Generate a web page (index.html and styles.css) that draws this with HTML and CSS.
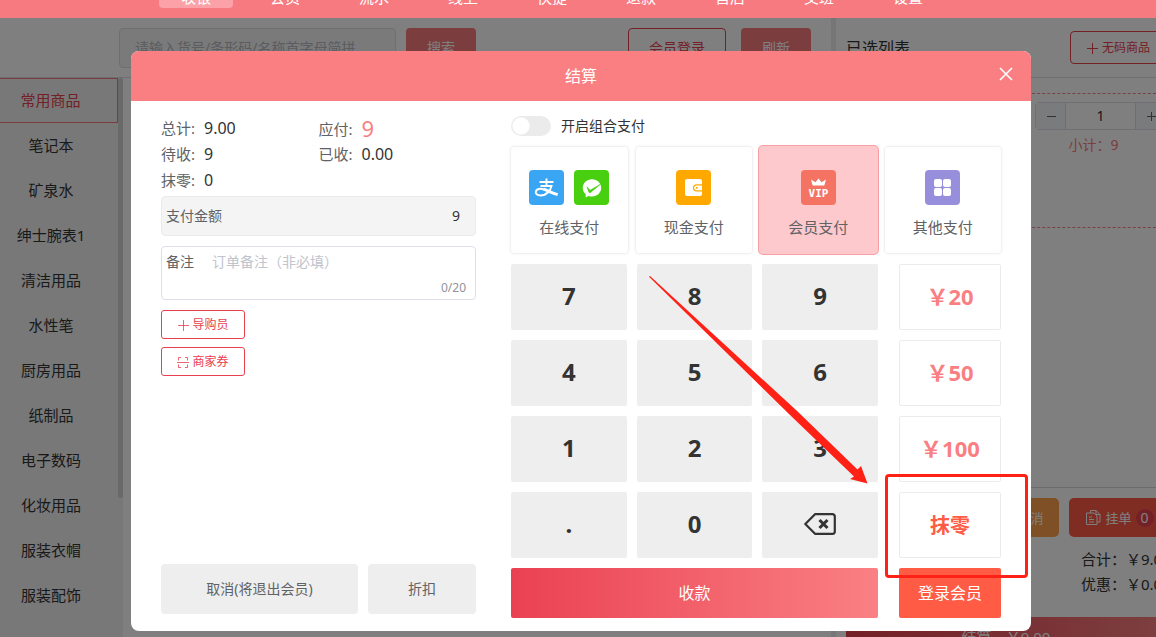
FILE: index.html
```html
<!DOCTYPE html>
<html lang="zh-CN">
<head>
<meta charset="utf-8">
<title>结算</title>
<link rel="stylesheet" href="styles.css">
</head>
<body>
<div class="app">
  <nav class="nav">
    <a class="nav-item active" href="#">收银</a>
    <a class="nav-item" href="#">会员</a>
    <a class="nav-item" href="#">流水</a>
    <a class="nav-item" href="#">线上</a>
    <a class="nav-item" href="#">快捷</a>
    <a class="nav-item" href="#">退款</a>
    <a class="nav-item" href="#">售后</a>
    <a class="nav-item" href="#">交班</a>
    <a class="nav-item" href="#">设置</a>
  </nav>
  <div class="workspace">
    <main class="goods">
      <div class="toolbar">
        <input class="search" type="text" aria-label="搜索商品" placeholder="请输入货号/条形码/名称首字母简拼">
        <button class="btn solid">搜索</button>
        <button class="btn outline member">会员登录</button>
        <button class="btn solid">刷新</button>
      </div>
      <div class="categories">
        <ul class="cat-list">
          <li class="cat current">常用商品</li>
          <li class="cat">笔记本</li>
          <li class="cat">矿泉水</li>
          <li class="cat">绅士腕表1</li>
          <li class="cat">清洁用品</li>
          <li class="cat">水性笔</li>
          <li class="cat">厨房用品</li>
          <li class="cat">纸制品</li>
          <li class="cat">电子数码</li>
          <li class="cat">化妆用品</li>
          <li class="cat">服装衣帽</li>
          <li class="cat">服装配饰</li>
        </ul>
        <div class="scroll-track"><div class="scroll-thumb"></div></div>
      </div>
    </main>
    <aside class="cart">
      <header class="cart-head">
        <h2 class="cart-title">已选列表</h2>
        <button class="btn outline nocode">
          <svg class="icon-12" viewBox="0 0 12 12"><path d="M6.500 1v11M1 6.500h11" stroke="currentColor" fill="none"/></svg>
          无码商品
        </button>
      </header>
      <div class="cart-body">
        <div class="cart-line">
          <div class="stepper">
            <button class="step" aria-label="减少"><svg class="icon-12" viewBox="0 0 12 12"><path d="M2 6.500h9" stroke="currentColor"/></svg></button>
            <input class="qty" type="text" aria-label="数量" value="1">
            <button class="step" aria-label="增加"><svg class="icon-12" viewBox="0 0 12 12"><path d="M2 6.500h9M6.500 2v9" stroke="currentColor"/></svg></button>
          </div>
          <p class="subtotal">小计：9</p>
        </div>
      </div>
      <footer class="cart-foot">
        <div class="cart-actions">
          <button class="act cancel">取消</button>
          <button class="act hold">
            <svg class="icon-15" viewBox="0 0 15 15" fill="none" stroke="currentColor"><path d="M4.500 3V.5H10L14 4.500V12H11M10 .5V4.500H14M.5 3H8l3 3v8.500H.5zM3 7h3M3 9.500h5M3 12h5"/></svg>
            挂单<span class="count">0</span>
          </button>
        </div>
        <dl class="sums">
          <div class="sum"><dt>合计：</dt><dd>￥9.00</dd></div>
          <div class="sum"><dt>优惠：</dt><dd>￥0.00</dd></div>
        </dl>
        <button class="checkout">结算<span>￥9.00</span></button>
      </footer>
    </aside>
    <div class="overlay">
      <section class="dialog" role="dialog" aria-label="结算">
        <header class="dialog-head">
          <h1 class="dialog-title">结算</h1>
          <button class="close" aria-label="关闭"><svg class="icon-14" viewBox="0 0 14 14"><path d="M1 1l12 12M13 1L1 13" stroke="#fff" stroke-width="1.600"/></svg></button>
        </header>
        <div class="dialog-body">
          <div class="summary">
            <dl class="totals">
              <div class="total"><dt>总计:</dt><dd>9.00</dd></div>
              <div class="total due"><dt>应付:</dt><dd>9</dd></div>
              <div class="total"><dt>待收:</dt><dd>9</dd></div>
              <div class="total"><dt>已收:</dt><dd>0.00</dd></div>
              <div class="total"><dt>抹零:</dt><dd>0</dd></div>
            </dl>
            <div class="amount">
              <label for="amount">支付金额</label>
              <input id="amount" class="amount-input" type="text" value="9">
            </div>
            <div class="remark">
              <label for="remark">备注</label>
              <textarea id="remark" class="remark-input" rows="1" placeholder="订单备注（非必填）"></textarea>
              <span class="remark-count">0/20</span>
            </div>
            <button class="mini"><svg class="icon-12" viewBox="0 0 12 12"><path d="M6.500 1v11M1 6.500h11" stroke="currentColor" stroke-opacity=".8" fill="none"/></svg>导购员</button>
            <button class="mini"><svg class="icon-12" viewBox="0 0 12 12"><path d="M4 1.500H1.500V4.500M8 1.500h2.500V4.500M1.500 8.500v3H4M10.500 8.500v3H8M0 6.500h12" stroke="currentColor" stroke-opacity=".8" fill="none"/></svg>商家券</button>
            <div class="leave">
              <button class="plain quit">取消(将退出会员)</button>
              <button class="plain discount">折扣</button>
            </div>
          </div>
          <div class="payment">
            <label class="combine"><input class="switch" type="checkbox">开启组合支付</label>
            <div class="methods">
              <button class="method">
                <span class="logos">
                  <svg class="logo" viewBox="0 0 35 35"><rect width="35" height="35" rx="4" fill="#3aa5f2"/><g fill="none" stroke="#fff" stroke-width="1.900"><path d="M10.500 12H24.500M17.500 8.500V16M11.500 16H22.500C21.500 20 18 25.500 11.500 25.500C8 25.500 6.500 23.500 6.800 21.800C7.400 18.600 11.500 18.200 15 19.500"/><path d="M14.500 19.200C19 20.800 23 22.800 28.700 24.600" stroke-width="3"/></g></svg>
                  <svg class="logo" viewBox="0 0 35 35"><rect width="35" height="35" rx="4" fill="#48d010"/><path d="M18 9.200c5.200 0 9.200 3.800 9.200 8.600s-4 8.700-9.200 8.700c-1.300 0-2.500-.2-3.600-.6L11.600 27.500l.2-3.200C9.900 22.700 8.800 20.400 8.800 17.800c0-4.800 4-8.600 9.200-8.600z" fill="#fff"/><path d="M13 16.800l3 3.500L26.500 14.200l-10 8.300c-.6.500-1.200.4-1.600-.3z" fill="#48d010" stroke="#48d010" stroke-width=".6"/></svg>
                </span>
                在线支付
              </button>
              <button class="method">
                <span class="logos">
                  <svg class="logo" viewBox="0 0 35 35"><rect width="35" height="35" rx="4" fill="#ffa900"/><rect x="9" y="9" width="17" height="17" rx="2" fill="#fff"/><path d="M26 14.800H20.500a3 3 0 0 0 0 6H26" fill="#fff" stroke="#ffa900" stroke-width="1.200"/><circle cx="20.800" cy="17.800" r="1" fill="#ffa900"/></svg>
                </span>
                现金支付
              </button>
              <button class="method selected">
                <span class="logos">
                  <svg class="logo" viewBox="0 0 35 35"><rect width="35" height="35" rx="4" fill="#f57363"/><path d="M10 9.500l4.500 2.800L17.500 8.500l3 3.800L25 9.500 23.300 15.500H11.700z" fill="#fff"/><text class="vip" x="17.500" y="27" text-anchor="middle">VIP</text></svg>
                </span>
                会员支付
              </button>
              <button class="method">
                <span class="logos">
                  <svg class="logo" viewBox="0 0 35 35"><rect width="35" height="35" rx="4" fill="#988fdc"/><g fill="#fff"><rect x="9" y="9" width="8" height="8" rx="2"/><rect x="18" y="9" width="8" height="8" rx="2"/><rect x="9" y="18" width="8" height="8" rx="2"/><rect x="18" y="18" width="8" height="8" rx="2"/></g></svg>
                </span>
                其他支付
              </button>
            </div>
            <div class="pads">
              <div class="keypad">
                <button class="key">7</button><button class="key">8</button><button class="key">9</button>
                <button class="key">4</button><button class="key">5</button><button class="key">6</button>
                <button class="key">1</button><button class="key">2</button><button class="key">3</button>
                <button class="key">.</button><button class="key">0</button>
                <button class="key" aria-label="退格"><svg class="erase" viewBox="0 0 32 22" fill="none" stroke="#333"><path d="M11 1.200H28.500a2.300 2.300 0 0 1 2.300 2.300v15a2.300 2.300 0 0 1-2.300 2.300H11L1.300 11z" stroke-width="2.200" stroke-linejoin="round"/><path d="M15.500 7l8 8M23.500 7l-8 8" stroke-width="3"/></svg></button>
                <button class="collect">收款</button>
              </div>
              <div class="quick">
                <button class="cash">￥20</button>
                <button class="cash">￥50</button>
                <button class="cash">￥100</button>
                <button class="cash round">抹零</button>
                <button class="login">登录会员</button>
              </div>
            </div>
          </div>
        </div>
        <svg class="pointer" viewBox="0 0 219 208"><path d="M0 .8L1 0 147 134 208.500 193.500 212 190 218.500 207.500 201 203 205 200.500 141 139z" fill="#ff2116"/></svg>
        <div class="marker"></div>
      </section>
    </div>
  </div>
</div>
</body>
</html>
```
FILE: styles.css
```css
* { box-sizing: border-box; }
html, body { height: 100%; }
body {
  margin: 0;
  overflow: hidden;
  background: #fff;
  color: #333;
  font: 14px/20px "Noto Sans", "Noto Sans CJK SC", sans-serif;
}
button, input, textarea { font: inherit; color: inherit; margin: 0; }
button { border: 0; padding: 0; background: none; cursor: pointer; white-space: nowrap; }
h1, h2, p, dl, dd, ul { margin: 0; padding: 0; font-weight: 400; }
ul { list-style: none; }
svg { display: block; flex: none; }
.icon-12 { width: 12px; height: 12px; }
.icon-14 { width: 14px; height: 14px; }
.icon-15 { width: 15px; height: 15px; }

.app { display: flex; flex-direction: column; min-width: 1176px; height: 100vh; }

.nav {
  display: flex;
  align-items: flex-end;
  gap: 15px;
  height: 18px;
  padding: 0 0 10px 159px;
  overflow: hidden;
  background: #f77a81;
}
.nav-item {
  width: 74px;
  height: 22px;
  border-radius: 4px;
  color: #fff;
  font-size: 15px;
  line-height: 22px;
  text-align: center;
  text-decoration: none;
}
.nav-item.active { background: #fba1a7; }

.workspace { position: relative; display: flex; flex: 1; min-height: 0; }
.goods { display: flex; flex: 1; flex-direction: column; min-height: 0; }
.toolbar {
  display: flex;
  align-items: center;
  gap: 10px;
  height: 60px;
  padding: 0 20px 0 119px;
  border-bottom: 1px solid #dcdfe6;
}
.search {
  width: 277px;
  height: 40px;
  padding: 0 15px;
  border: 1px solid #dcdfe6;
  border-radius: 4px;
  background: #f5f5f5;
}
.search::placeholder { color: #b4b8c0; }
.btn { height: 40px; border-radius: 4px; }
.btn.solid { width: 70px; background: #f87a7d; color: #fff; }
.btn.outline { border: 1px solid #e9404f; color: #e9404f; }
.btn.member { width: 98px; margin: 0 5px 0 auto; }

.categories { display: flex; width: 123px; flex: 1; min-height: 0; background: #f0f0f0; }
.cat-list { flex: 1; overflow: hidden; }
.cat {
  height: 45px;
  padding-right: 16px;
  border: 1px solid transparent;
  font-size: 15px;
  line-height: 42px;
  text-align: center;
}
.cat.current { border-color: #f8777c; border-left: 0; color: #e9404f; }
.scroll-track { width: 5px; }
.scroll-thumb { height: 420px; border-radius: 3px; background: #d2d2d2; }

.cart {
  display: flex;
  flex-direction: column;
  width: 345px;
  border-left: 5px solid #ececec;
}
.cart-head {
  display: flex;
  align-items: center;
  justify-content: space-between;
  height: 60px;
  padding: 0 10px;
  border-bottom: 1px solid #dcdfe6;
}
.cart-title { font-size: 16px; }
.nocode {
  display: flex;
  align-items: center;
  justify-content: center;
  gap: 4px;
  width: 96px;
  height: 33px;
  font-size: 12px;
}
.cart-body { flex: 1; padding-top: 15px; }
.cart-line {
  display: flex;
  flex-direction: column;
  align-items: flex-end;
  gap: 5px;
  height: 135px;
  padding: 8px 10px;
  border: dashed #f0848a;
  border-width: 1px 0;
}
.stepper {
  display: flex;
  width: 131px;
  height: 28px;
  border: 1px solid #dcdfe6;
  border-radius: 4px;
}
.step { display: flex; align-items: center; justify-content: center; width: 29px; background: #f5f7fa; color: #606266; }
.qty {
  flex: 1;
  min-width: 0;
  padding: 0;
  border: solid #dcdfe6;
  border-width: 0 1px;
  background: none;
  text-align: center;
}
.subtotal { width: 131px; color: #f87a7d; text-align: center; padding-right: 14px; }
.cart-foot { padding: 10px 10px 0; border-top: 1px solid #d4d6dc; }
.cart-actions { display: flex; justify-content: flex-end; gap: 10px; }
.act { width: 97px; height: 39px; border-radius: 5px; color: #fff; font-size: 13px; }
.act.cancel { padding-left: 40px; background: #ff9f4a; }
.hold { display: flex; align-items: center; justify-content: center; gap: 4px; padding-left: 5px; background: #ff5b45; }
.count {
  width: 18px;
  border-radius: 9px;
  background: #e9404f;
  font-size: 14px;
  line-height: 18px;
}
.sums { height: 80px; padding: 10px 0 0 235px; font-size: 15px; line-height: 25px; }
.sum { display: flex; white-space: nowrap; }
.checkout {
  display: block;
  width: 100%;
  height: 40px;
  margin-bottom: -20px;
  background: linear-gradient(90deg, #e9404f, #fa7f81);
  color: #fff;
  font-size: 15px;
}
.checkout span { margin-left: 14px; }

.overlay {
  position: absolute;
  inset: 0;
  display: flex;
  align-items: flex-start;
  justify-content: flex-start;
  padding: 33px 0 0 131px;
  background: rgba(0, 0, 0, .5);
}
.dialog {
  position: relative;
  width: 900px;
  overflow: hidden;
  border-radius: 8px;
  background: #fff;
}
.dialog-head {
  display: flex;
  align-items: center;
  height: 50px;
  padding: 0 18px;
  background: #fa7f82;
  color: #fff;
}
.dialog-title { flex: 1; padding-left: 14px; font-size: 16px; text-align: center; }
.close { padding-bottom: 5px; }
.dialog-body { display: flex; gap: 35px; padding: 15px 30px 13px; }

.summary { display: flex; flex: 1; flex-direction: column; align-items: flex-start; }
.totals { display: grid; grid-template-columns: 1fr 1fr; width: 100%; height: 80px; grid-template-rows: 24px 28px 24px; }
.total { display: flex; align-items: center; gap: 9px; }
.total dt { color: #606266; font-size: 15px; }
.total dd { font-size: 16px; }
.total.due dt { padding-top: 2px; }
.total.due dd { color: #fa7f82; font-size: 22px; }
.amount {
  display: flex;
  align-items: center;
  justify-content: space-between;
  width: 100%;
  height: 40px;
  padding: 0 15px 0 4px;
  border: 1px solid #ebebeb;
  border-radius: 4px;
  background: #f4f4f4;
}
.amount label { color: #606266; }
.amount-input { width: 120px; padding: 0; border: 0; background: none; text-align: right; }
.remark {
  display: grid;
  grid-template-columns: 46px 1fr;
  width: 100%;
  height: 54px;
  margin: 10px 0;
  padding: 5px 9px 0 4px;
  border: 1px solid #dcdfe6;
  border-radius: 4px;
}
.remark label { color: #606266; }
.remark-input { height: 24px; padding: 0; border: 0; resize: none; overflow: hidden; background: none; }
.remark-input::placeholder { color: #c0c4cc; }
.remark-count { grid-column: 2; color: #909399; font-size: 12px; text-align: right; }
.mini {
  display: flex;
  align-items: center;
  justify-content: center;
  gap: 3px;
  width: 84px;
  height: 29px;
  margin-bottom: 8px;
  border: 1px solid #e9404f;
  border-radius: 3px;
  color: #e9404f;
  font-size: 12px;
}
.leave { display: flex; gap: 10px; width: 100%; margin: auto 0 4px; }
.plain { height: 50px; border-radius: 4px; background: #eee; color: #606266; }
.quit { flex: 1; }
.discount { width: 108px; }

.payment { width: 490px; }
.combine { display: flex; align-items: center; gap: 10px; height: 20px; }
.switch {
  appearance: none;
  width: 40px;
  height: 20px;
  margin: 0;
  border-radius: 10px;
  background: radial-gradient(circle at 10px 10px, #fff 8px, #ebebeb 9px);
}
.methods { display: grid; grid-template-columns: repeat(4, 1fr); gap: 8px; margin: 11px 0; }
.method {
  display: flex;
  flex-direction: column;
  align-items: center;
  gap: 12px;
  height: 106px;
  padding-top: 23px;
  border-radius: 3px;
  box-shadow: 0 0 3px rgba(0, 0, 0, .16);
  color: #606266;
  font-size: 15px;
}
.method.selected { background: #fdc9cc; box-shadow: 0 0 0 1px #fdc9cc, 0 0 0 2px #fa9fa3; }
.logos { display: flex; gap: 10px; }
.logo { width: 35px; height: 35px; }
.vip { fill: #fff; font: 700 11px "DejaVu Sans Mono", monospace; }

.pads { display: flex; gap: 21px; }
.keypad { display: grid; flex: 1; grid-template-columns: repeat(3, 1fr); gap: 10px; }
.key {
  display: flex;
  align-items: center;
  justify-content: center;
  height: 66px;
  padding-bottom: 2px;
  border-radius: 2px;
  background: #eee;
  font-size: 24px;
  font-weight: 700;
}
.erase { width: 32px; height: 22px; }
.collect {
  grid-column: 1 / -1;
  height: 50px;
  border-radius: 2px;
  background: linear-gradient(90deg, #ea4152, #fa8083);
  color: #fff;
  font-size: 16px;
}
.quick { display: flex; flex-direction: column; gap: 10px; width: 102px; }
.cash {
  height: 66px;
  padding-bottom: 2px;
  border: 1px solid #ebebeb;
  border-radius: 2px;
  color: #fa7f82;
  font-size: 22px;
  font-weight: 700;
}
.cash.round { padding: 2px 0 0; color: #ff5b45; font-size: 20px; }
.login { height: 50px; border-radius: 2px; background: #ff5b45; color: #fff; font-size: 16px; }

.pointer { position: absolute; left: 518px; top: 225px; width: 219px; height: 208px; }
.marker {
  position: absolute;
  left: 754px;
  top: 423px;
  width: 143px;
  height: 104px;
  border: 3px solid #ff2116;
  border-radius: 4px;
}
```
